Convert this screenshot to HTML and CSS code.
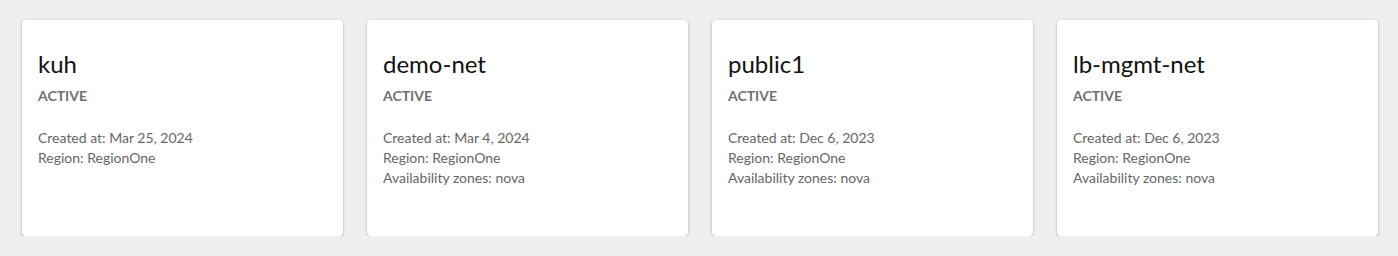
FILE: index.html
```html
<!DOCTYPE html>
<html>
<head>
<meta charset="utf-8">
<link rel="stylesheet" href="styles.css">
</head>
<body>
<div class="grid">
  <div class="card">
    <div class="title">kuh</div>
    <div class="status">ACTIVE</div>
    <div class="meta">
      <div>Created at: Mar 25, 2024</div>
      <div>Region: RegionOne</div>
    </div>
  </div>
  <div class="card">
    <div class="title">demo-net</div>
    <div class="status">ACTIVE</div>
    <div class="meta">
      <div>Created at: Mar 4, 2024</div>
      <div>Region: RegionOne</div>
      <div>Availability zones: nova</div>
    </div>
  </div>
  <div class="card">
    <div class="title">public1</div>
    <div class="status">ACTIVE</div>
    <div class="meta">
      <div>Created at: Dec 6, 2023</div>
      <div>Region: RegionOne</div>
      <div>Availability zones: nova</div>
    </div>
  </div>
  <div class="card">
    <div class="title">lb-mgmt-net</div>
    <div class="status">ACTIVE</div>
    <div class="meta">
      <div>Created at: Dec 6, 2023</div>
      <div>Region: RegionOne</div>
      <div>Availability zones: nova</div>
    </div>
  </div>
</div>
</body>
</html>
```
FILE: styles.css
```css
html, body {
  margin: 0;
  padding: 0;
  background: #efefef;
  font-family: "Lato", "Open Sans", sans-serif;
}
.grid {
  display: grid;
  grid-template-columns: repeat(4, 321px);
  column-gap: 24px;
  padding: 20px 20px 0 22px;
}
.card {
  background: #fff;
  border-radius: 4px;
  box-shadow: 0 1px 3px rgba(0, 0, 0, 0.3);
  height: 216px;
  box-sizing: border-box;
  padding: 29px 16px 0 16px;
}
.title {
  font-size: 24px;
  line-height: 30px;
  color: #111;
}
.status {
  margin-top: 8px;
  font-size: 14px;
  font-weight: bold;
  color: #707070;
  line-height: 17px;
}
.meta {
  margin-top: 24px;
  font-size: 14px;
  line-height: 20px;
  color: #666;
}
```
